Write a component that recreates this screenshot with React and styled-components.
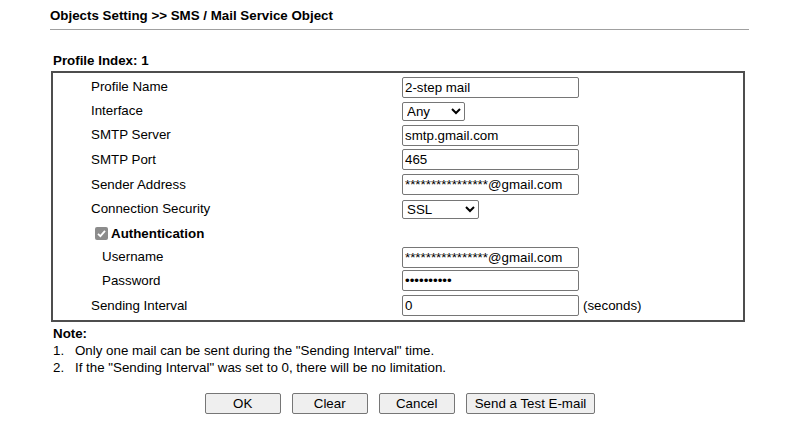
import React from "react";
import styled, { createGlobalStyle } from "styled-components";

const Global = createGlobalStyle`
  body {
    margin: 0;
    background: #fff;
    font-family: "Liberation Sans", Arial, sans-serif;
    font-size: 13.33px;
    color: #000;
  }
`;

const Page = styled.div`
  width: 701px;
  padding: 8px 0 0 48px;
`;

const Title = styled.h1`
  margin: 0 0 0 2px;
  font-size: 13.33px;
  font-weight: bold;
  line-height: 16px;
  padding-bottom: 5px;
  border-bottom: 1px solid #a0a0a0;
`;

const IndexLabel = styled.div`
  margin: 23px 0 0 5px;
  font-weight: bold;
  line-height: 16px;
`;

const Box = styled.div`
  margin: 2px 0 0 3px;
  width: 694px;
  border: 2px solid #4e4e4e;
  padding: 2px 0 2px 38px;
  box-sizing: border-box;
  display: grid;
  grid-template-columns: 311px 1fr;
  grid-template-rows: 24px 24px 24px 25px 25px 24px 25px 22px 25px 25px;
  align-items: center;
`;

const Label = styled.div`
  padding-left: ${(p) => (p.$indent ? 11 : 0)}px;
  line-height: 16px;
`;

const Field = styled.div`
  display: flex;
  align-items: center;
  gap: 4px;
`;

const Input = styled.input`
  width: 177px;
  height: 21px;
  box-sizing: border-box;
  border: 1px solid #767676;
  border-radius: 2px;
  padding: 1px 2px;
  font-family: "Liberation Sans", Arial, sans-serif;
  font-size: 13.33px;
  color: #000;
  background: #fff;
  outline: none;
`;

const Select = styled.select`
  width: ${(p) => p.$w}px;
  height: 19px;
  box-sizing: border-box;
  border: 1px solid #767676;
  border-radius: 2px;
  padding: 0;
  font-family: "Liberation Sans", Arial, sans-serif;
  font-size: 13.33px;
  color: #000;
  background: #fff;
`;

const AuthCell = styled.div`
  grid-column: 1 / span 2;
  display: flex;
  align-items: center;
  gap: 3px;
  padding-left: 4px;
  font-weight: bold;
`;

const Check = styled.span`
  width: 13px;
  height: 13px;
  border-radius: 2px;
  background: #8c8c8c;
  display: inline-flex;
  align-items: center;
  justify-content: center;
`;

const Note = styled.div`
  margin: 3px 0 0 5px;
  line-height: 17px;
`;

const NoteTitle = styled.div`
  font-weight: bold;
`;

const NoteItem = styled.div`
  display: flex;
  span:first-child {
    width: 22px;
  }
`;

const Buttons = styled.div`
  display: flex;
  justify-content: center;
  gap: 11px;
  margin: 17px 0 0 3px;
`;

const Button = styled.button`
  min-width: 76px;
  height: 21px;
  padding: 0 8px;
  border: 1px solid #767676;
  border-radius: 2px;
  background: #efefef;
  font-family: "Liberation Sans", Arial, sans-serif;
  font-size: 13.33px;
  color: #000;
`;

export default function App() {
  return (
    <Page>
      <Global />
      <Title>Objects Setting &gt;&gt; SMS / Mail Service Object</Title>
      <IndexLabel>Profile Index: 1</IndexLabel>
      <Box>
        <Label>Profile Name</Label>
        <Field><Input defaultValue="2-step mail" /></Field>
        <Label>Interface</Label>
        <Field>
          <Select $w={63} defaultValue="Any"><option>Any</option></Select>
        </Field>
        <Label>SMTP Server</Label>
        <Field><Input defaultValue="smtp.gmail.com" /></Field>
        <Label>SMTP Port</Label>
        <Field><Input defaultValue="465" /></Field>
        <Label>Sender Address</Label>
        <Field><Input defaultValue="****************@gmail.com" /></Field>
        <Label>Connection Security</Label>
        <Field>
          <Select $w={77} defaultValue="SSL"><option>SSL</option></Select>
        </Field>
        <AuthCell>
          <Check>
            <svg width="11" height="11" viewBox="0 0 11 11">
              <path d="M2 5.8 L4.4 8.2 L9 2.8" fill="none" stroke="#fff" strokeWidth="1.8" />
            </svg>
          </Check>
          Authentication
        </AuthCell>
        <Label $indent>Username</Label>
        <Field><Input defaultValue="****************@gmail.com" /></Field>
        <Label $indent>Password</Label>
        <Field><Input type="password" defaultValue="abcdefghij" /></Field>
        <Label>Sending Interval</Label>
        <Field><Input defaultValue="0" /> (seconds)</Field>
      </Box>
      <Note>
        <NoteTitle>Note:</NoteTitle>
        <NoteItem><span>1.</span><span>Only one mail can be sent during the "Sending Interval" time.</span></NoteItem>
        <NoteItem><span>2.</span><span>If the "Sending Interval" was set to 0, there will be no limitation.</span></NoteItem>
      </Note>
      <Buttons>
        <Button>OK</Button>
        <Button>Clear</Button>
        <Button>Cancel</Button>
        <Button>Send a Test E-mail</Button>
      </Buttons>
    </Page>
  );
}
